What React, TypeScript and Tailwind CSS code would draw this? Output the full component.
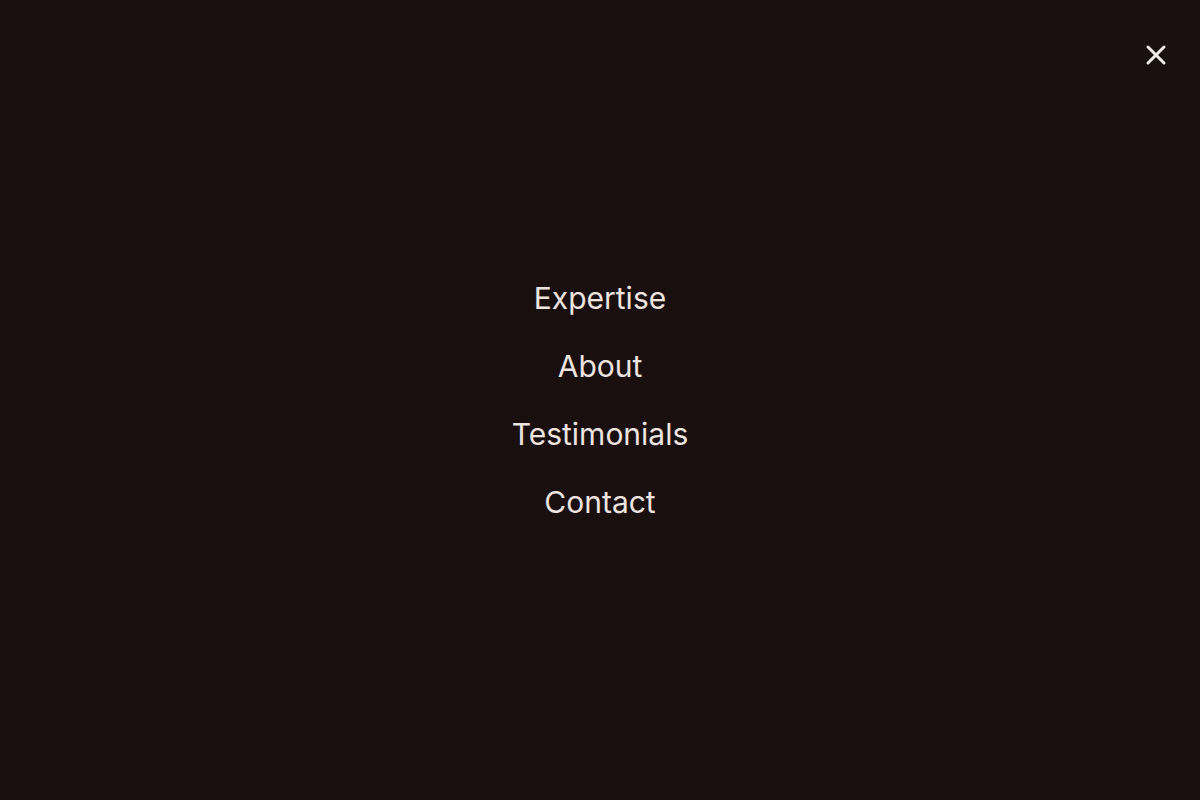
import { X } from "lucide-react";

const links = ["Expertise", "About", "Testimonials", "Contact"];

const App = () => {
	return (
		<div
			className="relative h-[800px] w-full bg-[#1a0f0f] flex items-center justify-center"
			style={{ fontFamily: "Inter, 'Noto Sans', sans-serif" }}
		>
			{/* Close button */}
			<button className="absolute top-[39px] right-[28px] text-[#f2ebe8]">
				<X size={32} strokeWidth={2.25} />
			</button>

			{/* Menu links */}
			<nav className="flex flex-col items-center gap-8">
				{links.map((link) => (
					<a key={link} className="text-[30px] leading-[36px] text-[#ede4e0]">
						{link}
					</a>
				))}
			</nav>
		</div>
	);
};

export default App;
